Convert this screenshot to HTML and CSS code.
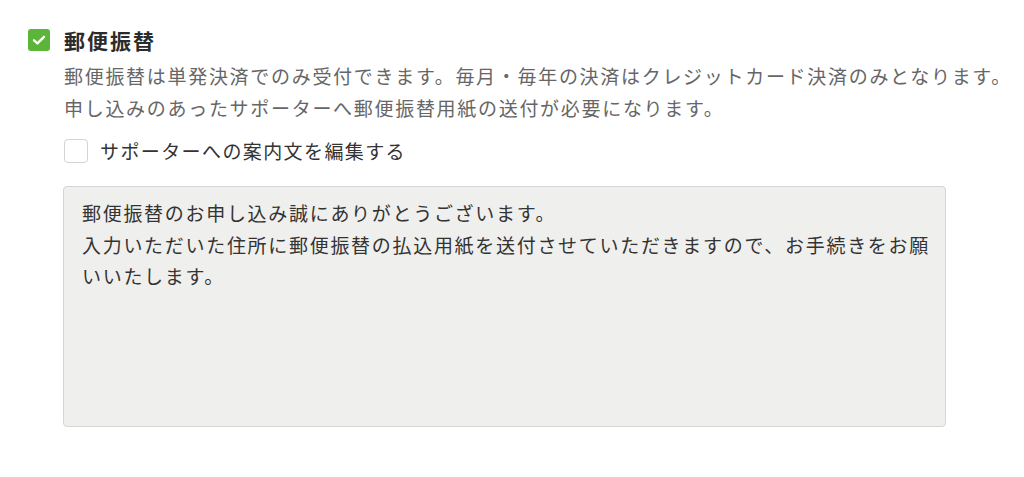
FILE: index.html
```html
<!DOCTYPE html>
<html lang="ja">
<head>
  <meta charset="UTF-8">
  <title>郵便振替</title>
  <link rel="stylesheet" href="styles.css">
</head>
<body>

<div class="payment">

  <!-- 決済方法 -->
  <label class="method">
    <span class="check on">
      <svg width="16" height="16" viewBox="0 0 16 16"><path d="M3 8.3 L6.4 11.4 L13 4.8" fill="none" stroke="#fff" stroke-width="2.4" stroke-linecap="round" stroke-linejoin="round"/></svg>
    </span>
    <span class="method-name">郵便振替</span>
  </label>

  <p class="note">
    郵便振替は単発決済でのみ受付できます。毎月・毎年の決済はクレジットカード決済のみとなります。<br>
    申し込みのあったサポーターへ郵便振替用紙の送付が必要になります。
  </p>

  <label class="option">
    <span class="check"></span>
    <span>サポーターへの案内文を編集する</span>
  </label>

  <textarea class="message" readonly>郵便振替のお申し込み誠にありがとうございます。
入力いただいた住所に郵便振替の払込用紙を送付させていただきますので、お手続きをお願いいたします。</textarea>

</div>

</body>
</html>
```

FILE: styles.css
```css
body {
  margin: 0;
  background: #fff;
  font-family: "Noto Sans CJK JP", "Noto Sans", sans-serif;
  color: #333;
}
.payment {
  padding: 29px 0 0 28px;
}
.method {
  display: flex;
  align-items: center;
  gap: 14px;
  height: 22px;
}
.check {
  box-sizing: border-box;
  width: 24px;
  height: 24px;
  border: 1px solid #d4d4d4;
  border-radius: 4px;
  background: #fff;
  display: flex;
  align-items: center;
  justify-content: center;
  flex-shrink: 0;
}
.check.on {
  width: 22px;
  height: 22px;
  border: none;
  border-radius: 3px;
  background: #5db43a;
}
.method-name {
  font-size: 21px;
  font-weight: bold;
  letter-spacing: 2px;
  line-height: 22px;
  color: #2b2b2b;
}
.note {
  margin: 9px 0 0 36px;
  font-size: 19px;
  line-height: 32px;
  letter-spacing: 1.7px;
  color: #666;
}
.option {
  display: flex;
  align-items: center;
  gap: 12px;
  margin: 15px 0 0 36px;
  font-size: 19px;
  letter-spacing: 1.4px;
  line-height: 24px;
  color: #333;
}
.message {
  display: block;
  box-sizing: border-box;
  width: 883px;
  height: 241px;
  margin: 23px 0 0 35px;
  padding: 10px 10px 10px 18px;
  border: 1px solid #d5d5d5;
  border-radius: 4px;
  background: #efefed;
  font-family: "Noto Sans CJK JP", "Noto Sans", sans-serif;
  font-size: 19px;
  line-height: 31.5px;
  letter-spacing: 1.7px;
  color: #333;
  resize: none;
  outline: none;
}
```
